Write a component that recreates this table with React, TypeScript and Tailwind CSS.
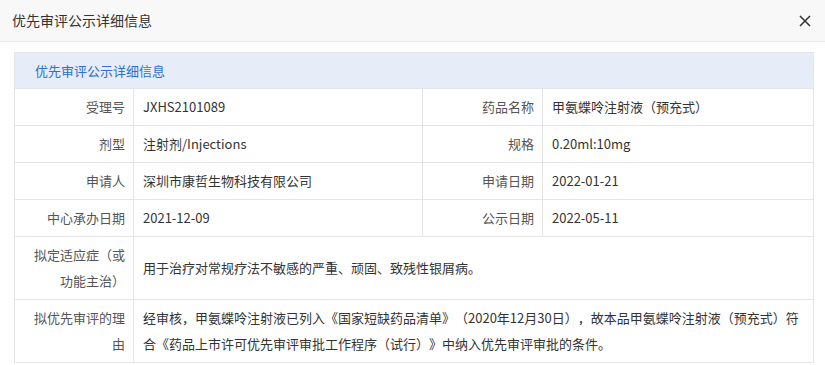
import React from 'react';

const rows: [string, string, string, string][] = [
  ['受理号', 'JXHS2101089', '药品名称', '甲氨蝶呤注射液（预充式）'],
  ['剂型', '注射剂/Injections', '规格', '0.20ml:10mg'],
  ['申请人', '深圳市康哲生物科技有限公司', '申请日期', '2022-01-21'],
  ['中心承办日期', '2021-12-09', '公示日期', '2022-05-11'],
];

const wide: [string, string][] = [
  ['拟定适应症（或功能主治）', '用于治疗对常规疗法不敏感的严重、顽固、致残性银屑病。'],
  [
    '拟优先审评的理由',
    '经审核，甲氨蝶呤注射液已列入《国家短缺药品清单》（2020年12月30日），故本品甲氨蝶呤注射液（预充式）符合《药品上市许可优先审评审批工作程序（试行）》中纳入优先审评审批的条件。',
  ],
];

const labelCls = 'border border-[#e5e5e5] text-right px-[8px] py-[5px] leading-[26px] text-[#555] align-middle';
const valueCls = 'border border-[#e5e5e5] text-left px-[9px] py-[5px] leading-[26px] text-[#333] align-middle';

export default function App() {
  return (
    <div className="w-[825px] h-[365px] bg-white text-[13px] [text-spacing-trim:space-all] font-['Noto_Sans_CJK_SC','Noto_Sans',sans-serif]">
      {/* header */}
      <div className="h-[42px] bg-[#f8f8f8] border-b border-[#e8e8e8] flex items-center justify-between pl-[12px] pr-[14px]">
        <span className="text-[14px] text-[#333]">优先审评公示详细信息</span>
        <svg width="12" height="12" viewBox="0 0 12 12" className="text-[#333]">
          <path d="M1 1L11 11M11 1L1 11" stroke="currentColor" strokeWidth="1.5" />
        </svg>
      </div>

      <div className="pt-[10px] px-[14px]">
        <table className="w-[799px] border-collapse table-fixed">
          <colgroup>
            <col className="w-[119px]" />
            <col className="w-[289px]" />
            <col className="w-[120px]" />
            <col className="w-[271px]" />
          </colgroup>
          <tbody>
            <tr>
              <td colSpan={4} className="border border-[#e5e5e5] bg-[#e6edf8] text-[#2f6fd3] px-[20px] h-[36px] align-middle">
                优先审评公示详细信息
              </td>
            </tr>
            {rows.map((r) => (
              <tr key={r[0]}>
                <td className={labelCls}>{r[0]}</td>
                <td className={valueCls}>{r[1]}</td>
                <td className={labelCls}>{r[2]}</td>
                <td className={valueCls}>{r[3]}</td>
              </tr>
            ))}
            {wide.map((r) => (
              <tr key={r[0]}>
                <td className={labelCls}>{r[0]}</td>
                <td colSpan={3} className={valueCls}>{r[1]}</td>
              </tr>
            ))}
          </tbody>
        </table>
      </div>
    </div>
  );
}
